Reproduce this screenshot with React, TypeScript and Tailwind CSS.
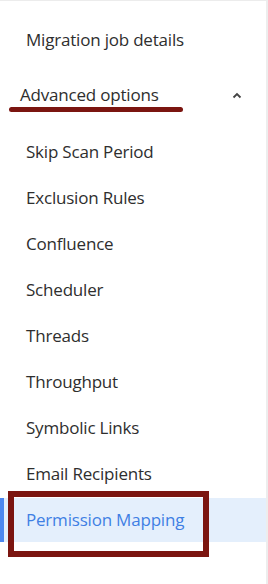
const items = [
  "Skip Scan Period",
  "Exclusion Rules",
  "Confluence",
  "Scheduler",
  "Threads",
  "Throughput",
  "Symbolic Links",
  "Email Recipients",
  "Permission Mapping",
];

const active = "Permission Mapping";

export default function App() {
  return (
    <div
      className="relative h-[584px] w-[268px] overflow-hidden border-t border-[#ececec] bg-white"
      style={{ fontFamily: "'Open Sans', 'Noto Sans', sans-serif" }}
    >
      <div className="h-full border-r-2 border-[#ededed] pt-[17px] text-[17px] tracking-[-0.2px] text-[#2e2e2e]">
        <div className="flex h-[44px] items-center pl-[26px]">Migration job details</div>

        <div className="relative mt-[11px] flex h-[44px] items-center justify-between pl-[20px] pr-[24px]">
          <span>Advanced options</span>
          <svg width="10" height="7" viewBox="0 0 10 7" className="text-[#444]">
            <polyline points="1.5,5.5 5,2 8.5,5.5" fill="none" stroke="currentColor" strokeWidth="1.8" />
          </svg>
          {/* annotation underline */}
          <div className="absolute left-[9px] top-[34px] h-[5px] w-[174px] rounded-full bg-[#7b1510]" />
        </div>

        <ul className="mt-[13px] flex flex-col gap-[2px]">
          {items.map((it) => (
            <li
              key={it}
              className={`flex h-[44px] items-center ${
                it === active ? "border-l-4 border-[#4d87ef] bg-[#e4effc] pl-[22px] text-[#3f7fe4]" : "pl-[26px]"
              }`}
            >
              {it}
            </li>
          ))}
        </ul>
      </div>

      {/* annotation box */}
      <div className="absolute left-[8px] top-[490px] h-[66px] w-[201px] border-[6px] border-[#7b1510]" />
    </div>
  );
}
